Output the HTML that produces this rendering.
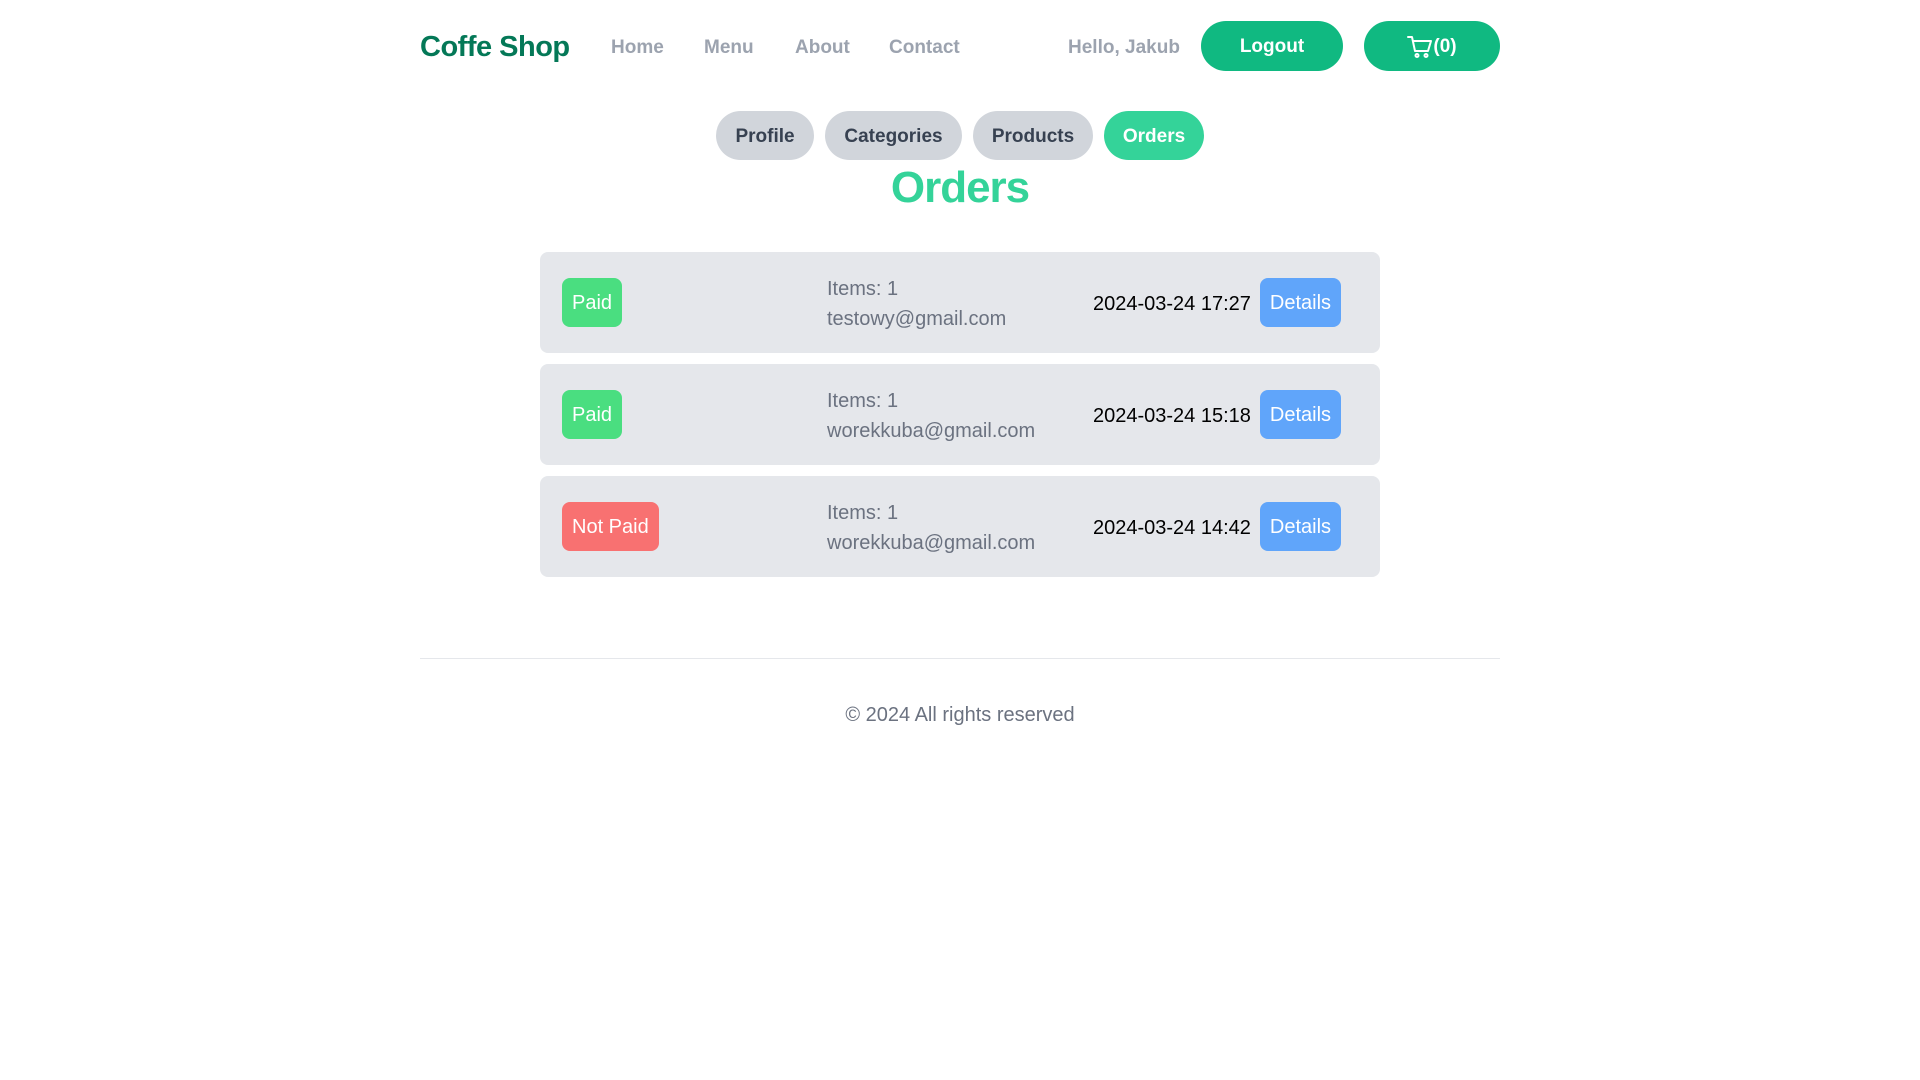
<!DOCTYPE html>
<html><head><meta charset="utf-8"><style>
*{margin:0;padding:0;box-sizing:border-box}
body{width:1920px;height:1080px;background:#fff;font-family:"Liberation Sans",Arial,sans-serif;position:relative;overflow:hidden}
.a{position:absolute;white-space:nowrap}
.logo{left:420px;top:28px;font-size:29px;font-weight:bold;color:#047857;letter-spacing:-0.5px;line-height:38px}
.nav{top:36px;font-size:19px;font-weight:bold;color:#9ca3af;line-height:24px}
.btn{display:flex;align-items:center;justify-content:center;border-radius:25px;background:#10b981;color:#fff;font-weight:bold;font-size:19px;padding-top:2px}
.tab{top:111px;height:49px;border-radius:25px;background:#d1d5db;color:#374151;font-weight:bold;font-size:19px;display:flex;align-items:center;justify-content:center;padding-top:3px}
.card{left:540px;width:840px;height:101px;background:#e5e7eb;border-radius:8px}
.badge{position:absolute;left:22px;top:26px;height:49px;border-radius:8px;color:#fff;font-size:20px;display:flex;align-items:center;padding:2px 10px 0}
.items{position:absolute;left:287px;top:22px;font-size:20px;line-height:30px;color:#6b7280}
.date{position:absolute;left:553px;top:40px;font-size:20px;line-height:24px;color:#000}
.det{position:absolute;left:720px;top:26px;width:81px;height:49px;border-radius:8px;background:#60a5fa;color:#fff;font-size:20px;display:flex;align-items:center;justify-content:center;padding-top:2px}
</style></head><body>
<div class="a logo">Coffe Shop</div>
<div class="a nav" style="left:611px">Home</div>
<div class="a nav" style="left:704px">Menu</div>
<div class="a nav" style="left:795px">About</div>
<div class="a nav" style="left:889px">Contact</div>
<div class="a nav" style="left:1068px">Hello, Jakub</div>
<div class="a btn" style="left:1201px;top:21px;width:142px;height:50px">Logout</div>
<div class="a btn" style="left:1364px;top:21px;width:136px;height:50px">
<svg width="26" height="24" viewBox="0 0 26 24" fill="none" stroke="#fff" stroke-width="2" stroke-linecap="round" stroke-linejoin="round"><path d="M1 2h4l3 14h13l3-10H6"/><circle cx="10" cy="20.5" r="1.5"/><circle cx="19" cy="20.5" r="1.5"/></svg><span>(0)</span></div>
<div class="a tab" style="left:716px;width:98px">Profile</div>
<div class="a tab" style="left:825px;width:137px">Categories</div>
<div class="a tab" style="left:973px;width:120px">Products</div>
<div class="a tab" style="left:1104px;width:100px;background:#34d399;color:#fff">Orders</div>
<div class="a" style="left:0;width:1920px;text-align:center;top:163px;font-size:44px;font-weight:bold;color:#34d399;line-height:50px;letter-spacing:-1px">Orders</div>

<div class="a card" style="top:252px"><div class="badge" style="background:#4ade80">Paid</div><div class="items">Items: 1<br>testowy@gmail.com</div><div class="date">2024-03-24 17:27</div><div class="det">Details</div></div>
<div class="a card" style="top:364px"><div class="badge" style="background:#4ade80">Paid</div><div class="items">Items: 1<br>worekkuba@gmail.com</div><div class="date">2024-03-24 15:18</div><div class="det">Details</div></div>
<div class="a card" style="top:476px"><div class="badge" style="background:#f87171">Not Paid</div><div class="items">Items: 1<br>worekkuba@gmail.com</div><div class="date">2024-03-24 14:42</div><div class="det">Details</div></div>

<div class="a" style="left:420px;width:1080px;top:658px;height:1px;background:#e5e7eb"></div>
<div class="a" style="left:0;width:1920px;text-align:center;top:703px;font-size:20px;color:#6b7280;line-height:24px">© 2024 All rights reserved</div>
</body></html>
